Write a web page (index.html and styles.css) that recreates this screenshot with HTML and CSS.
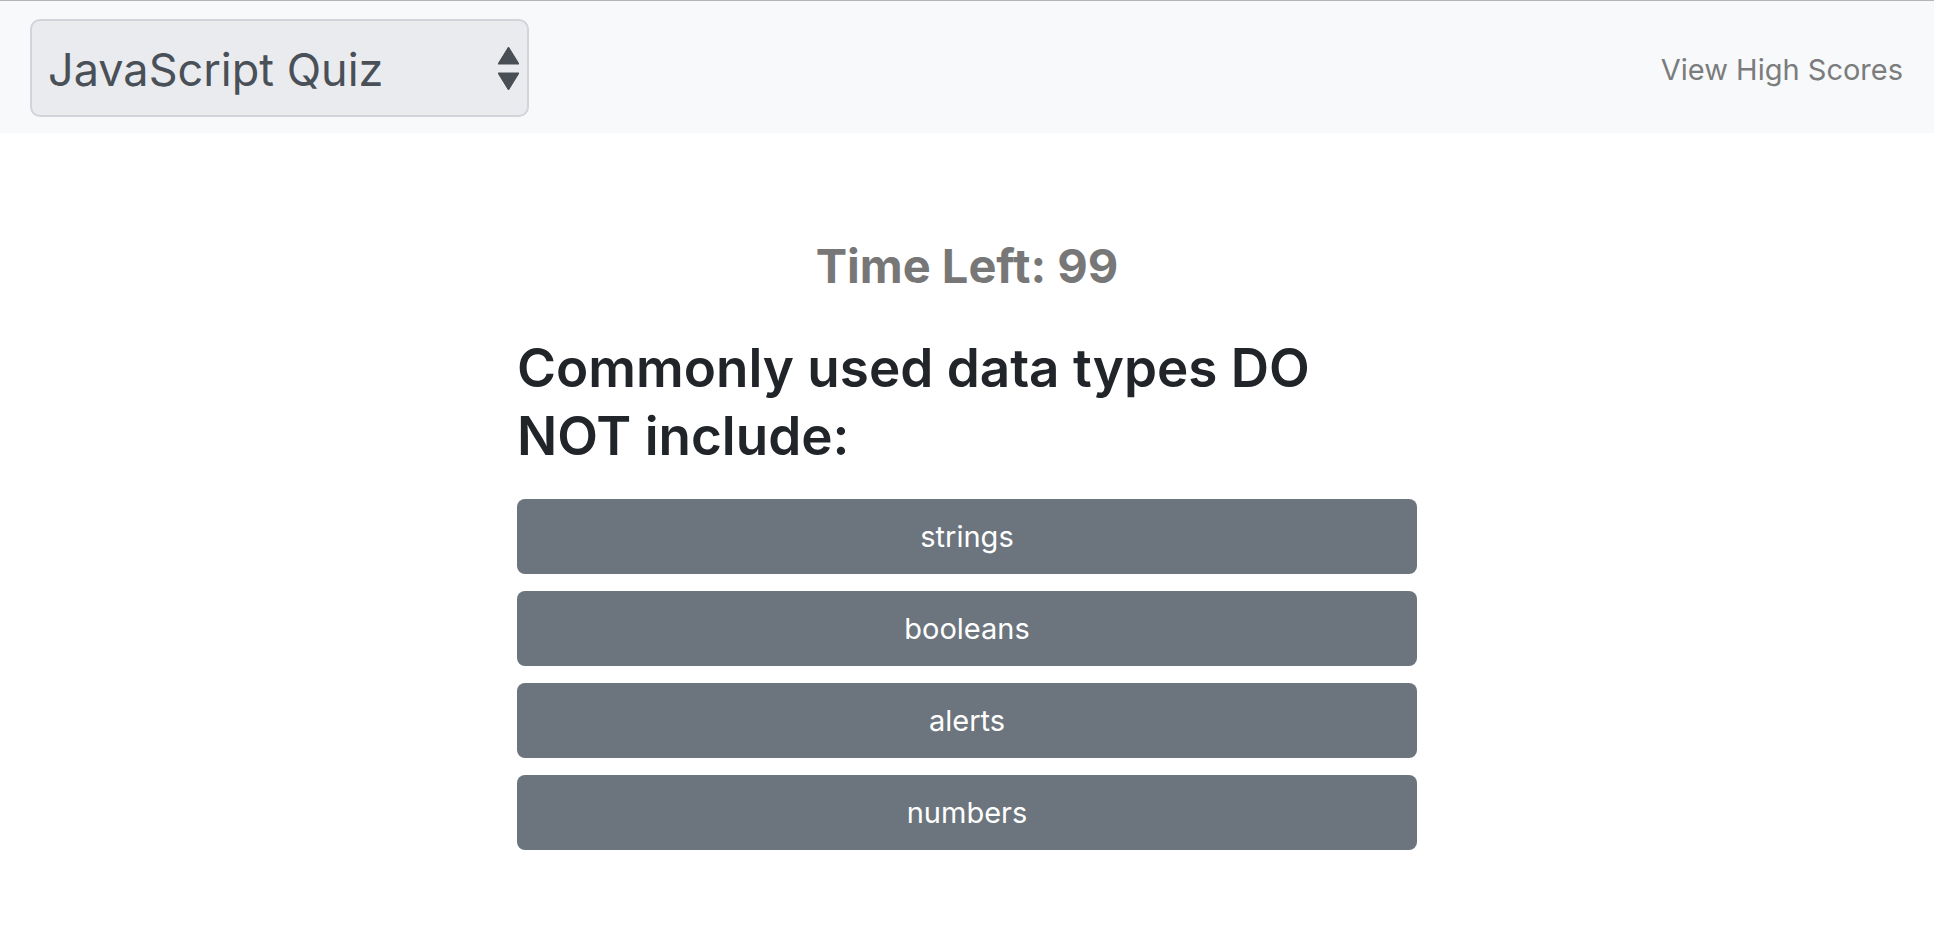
FILE: index.html
```html
<!DOCTYPE html>
<html lang="en">
<head>
<meta charset="utf-8">
<title>JavaScript Quiz</title>
<link rel="stylesheet" href="styles.css">
</head>
<body>
<nav class="navbar">
  <div class="quiz-select">
    <span class="quiz-select-label">JavaScript Quiz</span>
    <svg class="quiz-select-arrows" width="21" height="43" viewBox="0 0 21 43">
      <polygon points="10.5,0 21,17 0,17" fill="#4a4e55" stroke="#4a4e55" stroke-width="1" stroke-linejoin="round"/>
      <polygon points="0,26 21,26 10.5,43" fill="#4a4e55" stroke="#4a4e55" stroke-width="1" stroke-linejoin="round"/>
    </svg>
  </div>
  <a class="nav-link" href="#">View High Scores</a>
</nav>
<main class="quiz">
  <h4 class="timer">Time Left: 99</h4>
  <h3 class="question">Commonly used data types DO NOT include:</h3>
  <div class="answers">
    <button class="answer">strings</button>
    <button class="answer">booleans</button>
    <button class="answer">alerts</button>
    <button class="answer">numbers</button>
  </div>
</main>
</body>
</html>
```
FILE: styles.css
```css
html, body {
  margin: 0;
  padding: 0;
  background: #ffffff;
}
body {
  font-family: Inter, "Liberation Sans", sans-serif;
  color: #212529;
  border-top: 1px solid #b4b4b4;
}
.navbar {
  background: #f8f9fa;
  height: 132px;
  box-sizing: border-box;
  padding: 0 31px 0 30px;
  display: flex;
  align-items: center;
  justify-content: space-between;
}
.quiz-select {
  width: 499px;
  height: 98px;
  box-sizing: border-box;
  border: 2px solid #d1d5db;
  border-radius: 10px;
  background: #e9ebef;
  display: flex;
  align-items: center;
  justify-content: space-between;
  padding: 0 8px 0 16px;
  margin-top: 2px;
}
.quiz-select-label {
  font-size: 45px;
  color: #495057;
  margin-top: 2px;
}
.quiz-select-arrows {
  display: block;
}
.nav-link {
  font-size: 29px;
  color: #7b7c7d;
  text-decoration: none;
  margin-top: 4px;
}
.quiz {
  width: 900px;
  margin: 0 auto;
}
.timer {
  margin: 103px 0 0;
  text-align: center;
  font-size: 47px;
  font-weight: 700;
  line-height: 60px;
  color: #777777;
}
.question {
  margin: 38px 0 0;
  font-size: 53px;
  font-weight: 600;
  line-height: 68px;
  width: 820px;
}
.answers {
  margin-top: 29px;
  display: flex;
  flex-direction: column;
  gap: 17px;
}
.answer {
  height: 75px;
  border: none;
  border-radius: 8px;
  background: #6c757d;
  color: #ffffff;
  font-family: Inter, "Liberation Sans", sans-serif;
  font-size: 29px;
  cursor: pointer;
}
```
